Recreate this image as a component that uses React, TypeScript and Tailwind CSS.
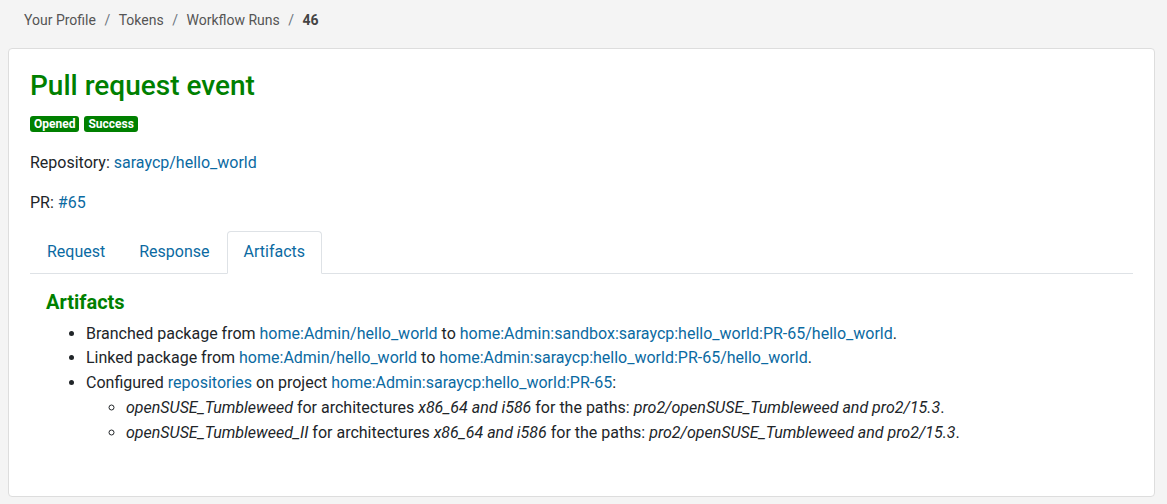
import React from "react";

const A = ({ children }: { children: React.ReactNode }) => (
  <a href="#" className="text-[#0b6aa2] no-underline">{children}</a>
);

export default function App() {
  return (
    <div className="min-h-[504px] bg-[#f4f4f4] text-[#212529] font-['Roboto',sans-serif] text-[16px] leading-[1.5] pt-[8px] pl-[8px] pr-[12px] pb-[8px]">
      <nav className="flex items-center text-[14px] text-[#555] pl-[16px] h-[24px]">
        <span>Your Profile</span>
        <span className="px-[8.5px] text-[#6c757d]">/</span>
        <span>Tokens</span>
        <span className="px-[8.5px] text-[#6c757d]">/</span>
        <span>Workflow Runs</span>
        <span className="px-[8.5px] text-[#6c757d]">/</span>
        <span className="font-bold text-[#444]">46</span>
      </nav>
      <div className="mt-[16px] bg-white border border-[#ddd] rounded-[4px] px-[21px] pt-[20px] pb-[50px]">
        <h1 className="text-[28px] font-medium text-[#008000] leading-[1.2] mb-[13px]">Pull request event</h1>
        <div className="flex gap-[5px] mb-[19px]">
          <span className="bg-[#008000] text-white text-[12px] font-bold leading-[16px] px-[4px] rounded-[3px]">Opened</span>
          <span className="bg-[#008000] text-white text-[12px] font-bold leading-[16px] px-[4px] rounded-[3px]">Success</span>
        </div>
        <p className="mb-[16px]">Repository: <A>saraycp/hello_world</A></p>
        <p className="mb-[16px]">PR: <A>#65</A></p>
        <div className="flex border-b border-[#dee2e6]">
          <div className="px-[16px] py-[8px] text-[#0b6aa2] border border-transparent">Request</div>
          <div className="px-[16px] py-[8px] text-[#0b6aa2] border border-transparent">Response</div>
          <div className="px-[16px] py-[8px] text-[#0b6aa2] border border-[#dee2e6] border-b-white rounded-t-[4px] -mb-px bg-white">Artifacts</div>
        </div>
        <div className="px-[16px] pt-[16px]">
          <h2 className="text-[20px] font-bold text-[#008000] leading-[1.2] mb-[8px]">Artifacts</h2>
          <ul className="list-disc pl-[40px] leading-[24.8px]">
            <li>Branched package from <A>home:Admin/hello_world</A> to <A>home:Admin:sandbox:saraycp:hello_world:PR-65/hello_world</A>.</li>
            <li>Linked package from <A>home:Admin/hello_world</A> to <A>home:Admin:saraycp:hello_world:PR-65/hello_world</A>.</li>
            <li>Configured <A>repositories</A> on project <A>home:Admin:saraycp:hello_world:PR-65</A>:
              <ul className="list-[circle] pl-[40px]">
                <li><i>openSUSE_Tumbleweed</i> for architectures <i>x86_64 and i586</i> for the paths: <i>pro2/openSUSE_Tumbleweed and pro2/15.3</i>.</li>
                <li><i>openSUSE_Tumbleweed_II</i> for architectures <i>x86_64 and i586</i> for the paths: <i>pro2/openSUSE_Tumbleweed and pro2/15.3</i>.</li>
              </ul>
            </li>
          </ul>
        </div>
      </div>
    </div>
  );
}
